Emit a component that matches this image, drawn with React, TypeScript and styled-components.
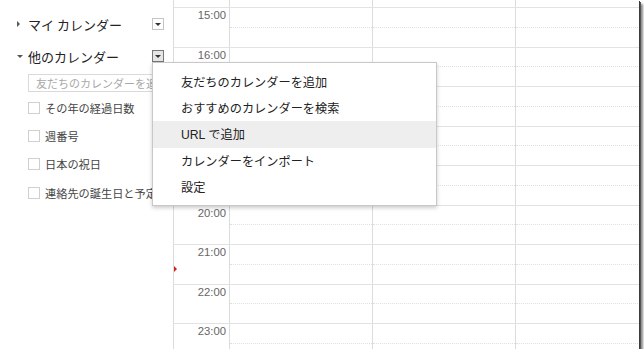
import React from "react";
import styled, { createGlobalStyle } from "styled-components";

const GlobalStyle = createGlobalStyle`
  html, body {
    margin: 0;
    padding: 0;
    background: #ffffff;
  }
  body {
    font-family: Arial, "Liberation Sans", "Noto Sans CJK JP", sans-serif;
  }
`;

const Frame = styled.div`
  position: relative;
  width: 639px;
  height: 349px;
  overflow: hidden;
  display: flex;
  background: #fff;
  box-shadow: 1px 1px 0 #3c3c3c, 2px 2px 0 #555, 4px 4px 2px rgba(0, 0, 0, 0.45);
`;

const Sidebar = styled.div`
  width: 173px;
  flex: none;
  display: flex;
  flex-direction: column;
  padding: 8px 9px 0 0;
  box-sizing: border-box;
`;

const Header = styled.div`
  height: 32px;
  display: flex;
  align-items: center;
`;

const Toggle = styled.span<{ $open?: boolean }>`
  width: 12px;
  margin-left: 16px;
  display: flex;
  align-items: center;

  &::before {
    content: "";
    display: block;
    width: 0;
    height: 0;
    ${(p) =>
      p.$open
        ? `border-left: 3px solid transparent;
           border-right: 3px solid transparent;
           border-top: 3px solid #555;
           margin-left: 1px;`
        : `border-top: 3px solid transparent;
           border-bottom: 3px solid transparent;
           border-left: 3px solid #555;
           margin-left: 1px;`}
  }
`;

const Title = styled.span`
  font-family: "Noto Sans CJK JP", sans-serif;
  font-size: 13px;
  color: #222;
  flex: 1;
  white-space: nowrap;
`;

const MenuButton = styled.span<{ $active?: boolean }>`
  width: 12px;
  height: 12px;
  box-sizing: border-box;
  border: 1px solid ${(p) => (p.$active ? "#777" : "#c4c4c4")};
  background: ${(p) => (p.$active ? "#e6e6e6" : "#fff")};
  display: flex;
  align-items: center;
  justify-content: center;
  margin-top: -1px;

  &::before {
    content: "";
    width: 0;
    height: 0;
    border-left: 3px solid transparent;
    border-right: 3px solid transparent;
    border-top: 3px solid #333;
    margin-top: 1px;
  }
`;

const AddInput = styled.input`
  margin: 2px 0 0 28px;
  width: 140px;
  height: 18px;
  box-sizing: border-box;
  border: 1px solid #d9d9d9;
  padding: 0 0 0 7px;
  font-family: "Noto Sans CJK JP", sans-serif;
  font-size: 11px;
  color: #333;
  outline: none;

  &::placeholder {
    color: #a8a8a8;
  }
`;

const CalList = styled.div`
  margin-top: 1.5px;
  display: flex;
  flex-direction: column;
`;

const CalItem = styled.label`
  height: 28.3px;
  display: flex;
  align-items: center;
  gap: 5px;
  padding-left: 28px;
  white-space: nowrap;
`;

const Check = styled.span`
  width: 12px;
  height: 12px;
  box-sizing: border-box;
  border: 1px solid #d0d0d0;
  background: #fff;
  flex: none;
`;

const CalName = styled.span`
  font-family: "Noto Sans CJK JP", sans-serif;
  font-size: 11.2px;
  color: #444;
`;

const Grid = styled.div`
  position: relative;
  flex: 1;
  border-left: 1px solid #dcdcdc;
  display: flex;
  flex-direction: column;
  margin-top: -32.2px;
`;

const HourRow = styled.div`
  height: 39.5px;
  flex: none;
  display: flex;
  box-sizing: border-box;
  border-top: 1px solid #e2e2e2;
`;

const TimeCell = styled.div`
  width: 55px;
  flex: none;
  text-align: right;
  padding: 1px 3px 0 0;
  box-sizing: border-box;
  font-family: Arial, "Liberation Sans", sans-serif;
  font-size: 11.3px;
  color: #666;
`;

const DayCell = styled.div`
  width: 143px;
  flex: none;
  position: relative;
  box-sizing: border-box;
  border-left: 1px solid #dcdcdc;

  &::after {
    content: "";
    position: absolute;
    left: 0;
    right: 0;
    top: 18.5px;
    border-top: 1px dotted #e0e0e0;
  }
`;

const NowMarker = styled.span`
  position: absolute;
  left: 0;
  top: 298px;
  width: 0;
  height: 0;
  border-top: 3px solid transparent;
  border-bottom: 3px solid transparent;
  border-left: 3px solid #d42020;
`;

const Menu = styled.div`
  position: absolute;
  left: 152px;
  top: 62px;
  width: 285px;
  box-sizing: border-box;
  padding: 6px 0 5px;
  background: #fff;
  border: 1px solid #c8c8c8;
  box-shadow: 0 2px 4px rgba(0, 0, 0, 0.2);
  display: flex;
  flex-direction: column;
  z-index: 2;
`;

const MenuItem = styled.div<{ $hover?: boolean }>`
  height: 26.2px;
  display: flex;
  align-items: center;
  padding-left: 28px;
  background: ${(p) => (p.$hover ? "#eeeeee" : "transparent")};
  font-family: Arial, "Liberation Sans", "Noto Sans CJK JP", sans-serif;
  font-size: 12.2px;
  color: #222;
  white-space: nowrap;
`;

// 14:00 row sits above the visible area, so its label stays empty
const hours = [14, 15, 16, 17, 18, 19, 20, 21, 22, 23];
const calendars = ["その年の経過日数", "週番号", "日本の祝日", "連絡先の誕生日と予定"];
const menuItems = [
  "友だちのカレンダーを追加",
  "おすすめのカレンダーを検索",
  "URL で追加",
  "カレンダーをインポート",
  "設定",
];

const App: React.FC = () => {
  return (
    <>
      <GlobalStyle />
      <Frame>
        <Sidebar>
          <Header>
            <Toggle />
            <Title>マイ カレンダー</Title>
            <MenuButton />
          </Header>
          <Header>
            <Toggle $open />
            <Title>他のカレンダー</Title>
            <MenuButton $active />
          </Header>
          <AddInput placeholder="友だちのカレンダーを追加" />
          <CalList>
            {calendars.map((name) => (
              <CalItem key={name}>
                <Check />
                <CalName>{name}</CalName>
              </CalItem>
            ))}
          </CalList>
        </Sidebar>

        <Grid>
          {hours.map((h, i) => (
            <HourRow key={h}>
              <TimeCell>{i === 0 ? "" : `${h}:00`}</TimeCell>
              <DayCell />
              <DayCell />
              <DayCell />
            </HourRow>
          ))}
          <NowMarker />
        </Grid>

        <Menu>
          {menuItems.map((item) => (
            <MenuItem key={item} $hover={item === "URL で追加"}>
              {item}
            </MenuItem>
          ))}
        </Menu>
      </Frame>
    </>
  );
};

export default App;
